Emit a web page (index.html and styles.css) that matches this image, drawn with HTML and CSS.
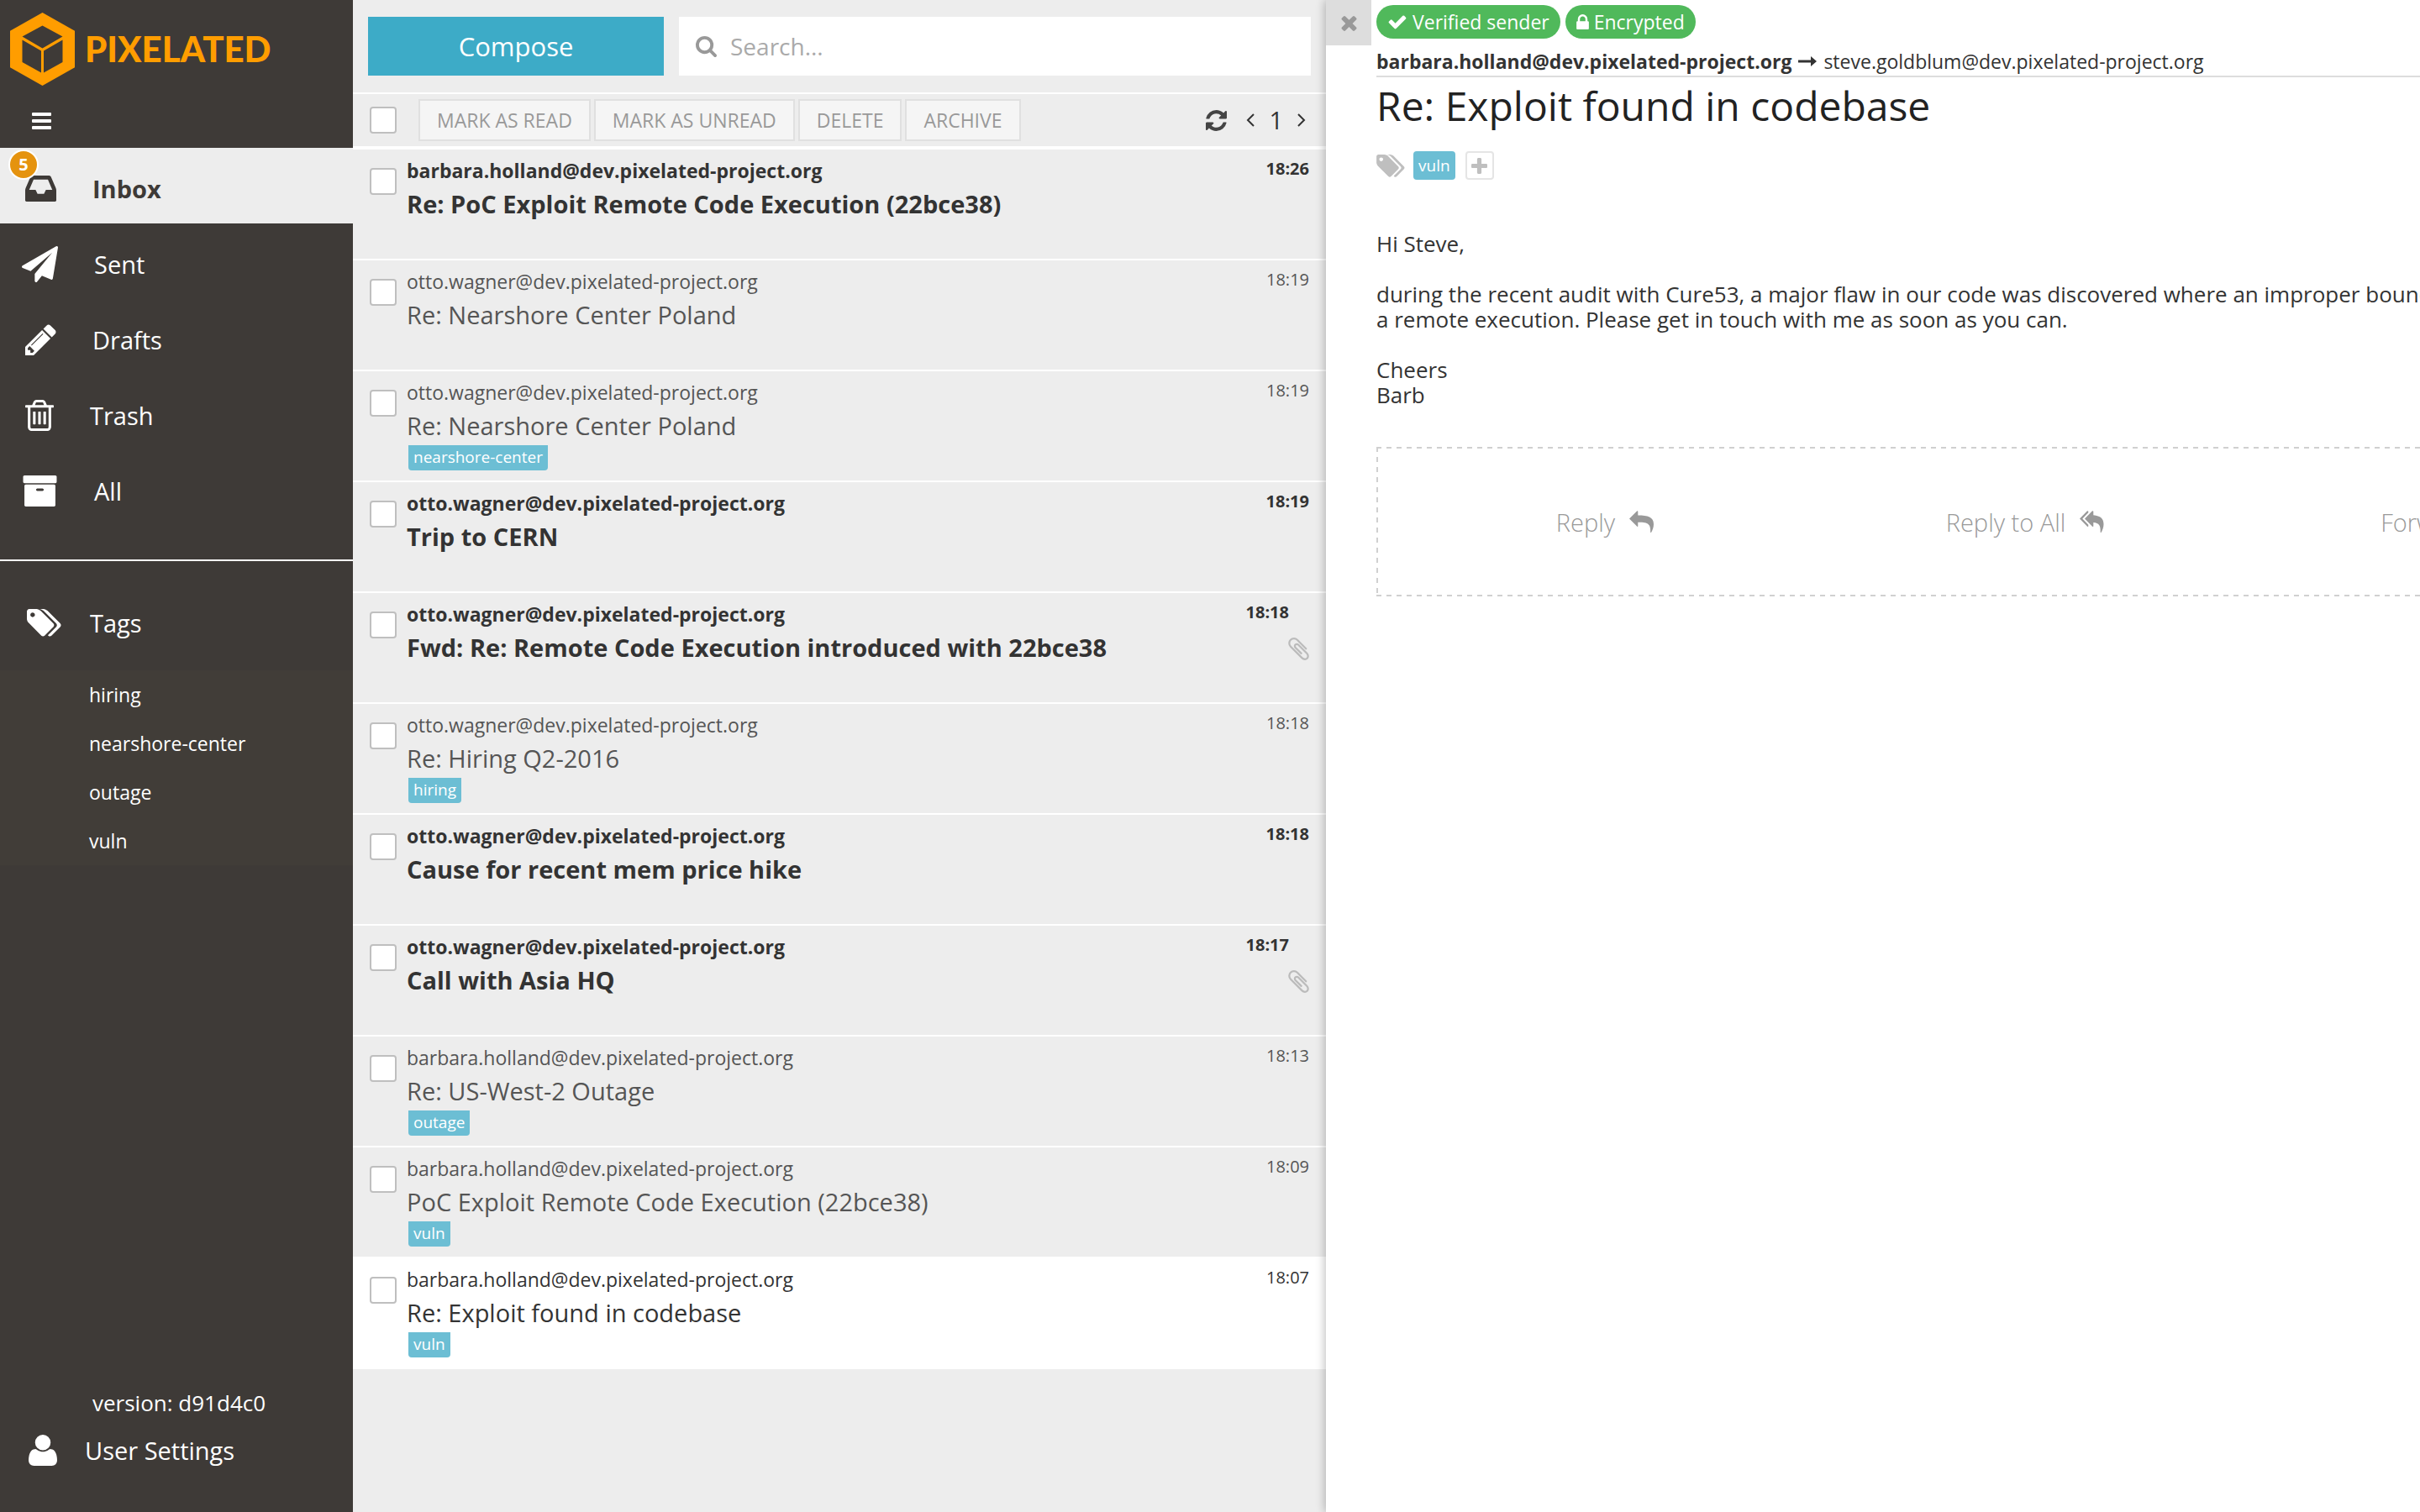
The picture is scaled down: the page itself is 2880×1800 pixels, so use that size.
FILE: index.html
```html
<!DOCTYPE html>
<html lang="en">
<head>
<meta charset="utf-8">
<title>Pixelated</title>
<link rel="stylesheet" href="styles.css">
</head>
<body>
<svg class="sprite" aria-hidden="true">
  <symbol id="i-tags" viewBox="0 128 1920 1536"><path d="M448 448q0-53-37.500-90.500t-90.500-37.500-90.500 37.500-37.500 90.500 37.500 90.500 90.500 37.500 90.500-37.500 37.500-90.500zm1067 576q0 53-37 90l-491 492q-39 37-91 37-53 0-90-37l-715-716q-38-37-64.500-101t-26.500-117v-416q0-52 38-90t90-38h416q53 0 117 26.500t102 64.500l715 714q37 39 37 91zm384 0q0 53-37 90l-491 492q-39 37-91 37-36 0-59-14t-53-45l470-470q37-37 37-90 0-52-37-91l-715-714q-38-38-102-64.500t-117-26.500h224q53 0 117 26.500t102 64.500l715 714q37 39 37 91z"/></symbol>
  <symbol id="i-clip" viewBox="192 128 1408 1536"><path d="M1596 1385q0 117-79 196t-196 79q-135 0-235-100l-777-776q-113-115-113-271 0-159 110-270t269-111q158 0 273 113l605 606q10 10 10 22 0 16-30.500 46.500t-46.500 30.500q-13 0-23-10l-606-607q-79-77-181-77-106 0-179 75t-73 181q0 105 76 181l776 777q63 63 145 63 64 0 106-42t42-106q0-82-63-145l-581-581q-26-24-60-24-29 0-48 19t-19 48q0 32 25 59l410 410q10 10 10 22 0 16-31 47t-47 31q-12 0-22-10l-410-410q-63-61-63-149 0-82 57-139t139-57q88 0 149 63l581 581q100 98 100 235z"/></symbol>
</svg>

<div class="app">
  <nav class="sidebar" aria-label="Mailboxes">
    <a class="logo" href="#">
      <svg class="logo-mark" viewBox="0 0 77 87" aria-hidden="true"><path fill-rule="evenodd" d="M38.500 0L77 21.700V65.300L38.500 87L0 65.300V21.700ZM38.500 15.500L14.500 28.500L38.500 42.500L62.500 28.500ZM14.500 32.500V59L37 71.500V45.500ZM62.500 32.500V59L40 71.500V45.500Z"/></svg>
      <span class="logo-text">PIXELATED</span>
    </a>
    <button class="menu-toggle" aria-label="Toggle menu">
      <svg width="23" height="20" viewBox="0 0 23 20"><rect width="23" height="4" rx="1"/><rect y="8" width="23" height="4" rx="1"/><rect y="16" width="23" height="4" rx="1"/></svg>
    </button>
    <ul class="nav">
      <li><a class="nav-item active" href="#">
        <svg width="37" height="31" viewBox="128 256 1536 1280"><path d="M1151 960h316q-1-3-2.500-8t-2.500-8l-212-496h-708l-212 496q-1 2-2.500 8t-2.500 8h316l95 192h320zm513 30v482q0 26-19 45t-45 19h-1408q-26 0-45-19t-19-45v-482q0-62 25-123l238-552q10-25 36.500-42t52.500-17h832q26 0 52.500 17t36.500 42l238 552q25 61 25 123z"/></svg>
        <span>Inbox</span><span class="count">5</span></a></li>
      <li><a class="nav-item wide" href="#">
        <svg width="43" height="43" viewBox="0 0 1792 1792"><path d="M1764 11q33 24 27 64l-256 1536q-5 29-32 45-14 8-31 8-11 0-24-5l-453-185-242 295q-18 23-49 23-13 0-22-4-19-7-30.500-23.500t-11.500-36.500v-349l864-1059-1069 925-395-162q-37-14-40-55-2-40 32-59l1664-960q15-9 32-9 20 0 36 11z"/></svg>
        <span>Sent</span></a></li>
      <li><a class="nav-item" href="#">
        <svg width="37" height="37" viewBox="128 128 1536 1536"><path d="M491 1536l91-91-235-235-91 91v107h128v128h107zm523-928q0-22-22-22-10 0-17 7l-542 542q-7 7-7 17 0 22 22 22 10 0 17-7l542-542q7-7 7-17zm-54-192l416 416-832 832h-416v-416zm683 96q0 53-37 90l-166 166-416-416 166-165q36-38 90-38 53 0 91 38l235 234q37 39 37 91z"/></svg>
        <span>Drafts</span></a></li>
      <li><a class="nav-item" href="#">
        <svg width="34" height="37" viewBox="192 128 1408 1536"><path d="M704 736v576q0 14-9 23t-23 9h-64q-14 0-23-9t-9-23v-576q0-14 9-23t23-9h64q14 0 23 9t9 23zm256 0v576q0 14-9 23t-23 9h-64q-14 0-23-9t-9-23v-576q0-14 9-23t23-9h64q14 0 23 9t9 23zm256 0v576q0 14-9 23t-23 9h-64q-14 0-23-9t-9-23v-576q0-14 9-23t23-9h64q14 0 23 9t9 23zm128 724v-948h-896v948q0 22 7 40.500t14.500 27 10.500 8.500h832q3 0 10.500-8.500t14.500-27 7-40.500zm-672-1076h448l-48-117q-7-9-17-11h-317q-10 2-17 11zm928 32v64q0 14-9 23t-23 9h-96v948q0 83-47 143.500t-113 60.500h-832q-66 0-113-58.500t-47-141.500v-952h-96q-14 0-23-9t-9-23v-64q0-14 9-23t23-9h309l70-167q15-37 54-63t79-26h320q40 0 79 26t54 63l70 167h309q14 0 23 9t9 23z"/></svg>
        <span>Trash</span></a></li>
      <li><a class="nav-item wide" href="#">
        <svg width="43" height="37" viewBox="0 128 1792 1536"><path d="M1088 832q0-26-19-45t-45-19h-256q-26 0-45 19t-19 45 19 45 45 19h256q26 0 45-19t19-45zm576-192v960q0 26-19 45t-45 19h-1408q-26 0-45-19t-19-45v-960q0-26 19-45t45-19h1408q26 0 45 19t19 45zm64-448v256q0 26-19 45t-45 19h-1536q-26 0-45-19t-19-45v-256q0-26 19-45t45-19h1536q26 0 45 19t19 45z"/></svg>
        <span>All</span></a></li>
    </ul>
    <section class="tags">
      <h2 class="tags-title"><svg width="41" height="33"><use href="#i-tags"/></svg><span>Tags</span></h2>
      <ul class="tag-list">
        <li><a href="#">hiring</a></li>
        <li><a href="#">nearshore-center</a></li>
        <li><a href="#">outage</a></li>
        <li><a href="#">vuln</a></li>
      </ul>
    </section>
    <footer class="side-foot">
      <p class="version">version: d91d4c0</p>
      <a class="settings" href="#">
        <svg width="34" height="37" viewBox="192 128 1408 1536"><path d="M1600 1405q0 120-73 189.500t-194 69.500h-874q-121 0-194-69.500t-73-189.500q0-53 3.500-103.500t14-109 26.500-108.500 43-97.500 62-81 85.500-53.500 111.500-20q9 0 42 21.500t74.500 48 108 48 133.500 21.500 133.500-21.500 108-48 74.500-48 42-21.500q61 0 111.500 20t85.500 53.500 62 81 43 97.500 26.500 108.500 14 109 3.500 103.500zm-320-893q0 159-112.500 271.500t-271.500 112.500-271.500-112.500-112.500-271.500 112.500-271.500 271.500-112.500 271.500 112.500 112.500 271.500z"/></svg>
        <span>User Settings</span></a>
    </footer>
  </nav>

  <section class="mail-list" aria-label="Messages">
    <header class="top">
      <button class="compose">Compose</button>
      <label class="search">
        <svg width="25" height="25" viewBox="64 128 1664 1664" aria-hidden="true"><path d="M1216 832q0-185-131.500-316.500t-316.500-131.500-316.500 131.500-131.500 316.500 131.500 316.500 316.500 131.500 316.500-131.500 131.500-316.500zm512 832q0 52-38 90t-90 38q-54 0-90-38l-343-342q-179 124-399 124-143 0-273.500-55.500t-225-150-150-225-55.500-273.500 55.500-273.500 150-225 225-150 273.500-55.500 273.500 55.500 225 150 150 225 55.500 273.500q0 220-124 399l343 343q37 37 37 90z"/></svg>
        <input type="search" placeholder="Search..." aria-label="Search">
      </label>
    </header>
    <div class="toolbar">
      <input class="check" type="checkbox" aria-label="Select all">
      <div class="actions">
        <button>MARK AS READ</button>
        <button>MARK AS UNREAD</button>
        <button>DELETE</button>
        <button>ARCHIVE</button>
      </div>
      <div class="pager">
        <button class="refresh" aria-label="Refresh"><svg width="25" height="25" viewBox="128 128 1536 1536"><path d="M1639 1056q0 5-1 7-64 268-268 434.500t-478 166.500q-146 0-282.500-55t-243.500-157l-129 129q-19 19-45 19t-45-19-19-45v-448q0-26 19-45t45-19h448q26 0 45 19t19 45-19 45l-137 137q71 66 161 102t187 36q134 0 250-65t186-179q11-17 53-117 8-23 30-23h192q13 0 22.500 9.500t9.500 22.500zm25-800v448q0 26-19 45t-45 19h-448q-26 0-45-19t-19-45 19-45l138-138q-148-137-349-137-134 0-250 65t-186 179q-11 17-53 117-8 23-30 23h-199q-13 0-22.500-9.500t-9.500-22.500v-7q65-268 270-434.500t480-166.500q146 0 284 55.500t245 156.500l130-129q19-19 45-19t45 19 19 45z"/></svg></button>
        <button aria-label="Previous page"><svg width="10" height="16" viewBox="0 0 10 16"><path class="line" d="M9 1L2 8L9 15"/></svg></button>
        <span>1</span>
        <button aria-label="Next page"><svg width="10" height="16" viewBox="0 0 10 16"><path class="line" d="M1 1L8 8L1 15"/></svg></button>
      </div>
    </div>
    <ul class="mails">
      <li class="mail unread"><input class="check" type="checkbox" aria-label="Select message">
        <div class="mail-body"><p class="from">barbara.holland@dev.pixelated-project.org</p><p class="subject">Re: PoC Exploit Remote Code Execution (22bce38)</p></div>
        <div class="meta"><time>18:26</time></div></li>
      <li class="mail"><input class="check" type="checkbox" aria-label="Select message">
        <div class="mail-body"><p class="from">otto.wagner@dev.pixelated-project.org</p><p class="subject">Re: Nearshore Center Poland</p></div>
        <div class="meta"><time>18:19</time></div></li>
      <li class="mail"><input class="check" type="checkbox" aria-label="Select message">
        <div class="mail-body"><p class="from">otto.wagner@dev.pixelated-project.org</p><p class="subject">Re: Nearshore Center Poland</p><span class="tag">nearshore-center</span></div>
        <div class="meta"><time>18:19</time></div></li>
      <li class="mail unread"><input class="check" type="checkbox" aria-label="Select message">
        <div class="mail-body"><p class="from">otto.wagner@dev.pixelated-project.org</p><p class="subject">Trip to CERN</p></div>
        <div class="meta"><time>18:19</time></div></li>
      <li class="mail unread"><input class="check" type="checkbox" aria-label="Select message">
        <div class="mail-body"><p class="from">otto.wagner@dev.pixelated-project.org</p><p class="subject">Fwd: Re: Remote Code Execution introduced with 22bce38</p></div>
        <div class="meta attached"><time>18:18</time><svg width="25" height="27"><use href="#i-clip"/></svg></div></li>
      <li class="mail"><input class="check" type="checkbox" aria-label="Select message">
        <div class="mail-body"><p class="from">otto.wagner@dev.pixelated-project.org</p><p class="subject">Re: Hiring Q2-2016</p><span class="tag">hiring</span></div>
        <div class="meta"><time>18:18</time></div></li>
      <li class="mail unread"><input class="check" type="checkbox" aria-label="Select message">
        <div class="mail-body"><p class="from">otto.wagner@dev.pixelated-project.org</p><p class="subject">Cause for recent mem price hike</p></div>
        <div class="meta"><time>18:18</time></div></li>
      <li class="mail unread"><input class="check" type="checkbox" aria-label="Select message">
        <div class="mail-body"><p class="from">otto.wagner@dev.pixelated-project.org</p><p class="subject">Call with Asia HQ</p></div>
        <div class="meta attached"><time>18:17</time><svg width="25" height="27"><use href="#i-clip"/></svg></div></li>
      <li class="mail"><input class="check" type="checkbox" aria-label="Select message">
        <div class="mail-body"><p class="from">barbara.holland@dev.pixelated-project.org</p><p class="subject">Re: US-West-2 Outage</p><span class="tag">outage</span></div>
        <div class="meta"><time>18:13</time></div></li>
      <li class="mail"><input class="check" type="checkbox" aria-label="Select message">
        <div class="mail-body"><p class="from">barbara.holland@dev.pixelated-project.org</p><p class="subject">PoC Exploit Remote Code Execution (22bce38)</p><span class="tag">vuln</span></div>
        <div class="meta"><time>18:09</time></div></li>
      <li class="mail open"><input class="check" type="checkbox" aria-label="Select message">
        <div class="mail-body"><p class="from">barbara.holland@dev.pixelated-project.org</p><p class="subject">Re: Exploit found in codebase</p><span class="tag">vuln</span></div>
        <div class="meta"><time>18:07</time></div></li>
    </ul>
  </section>

  <main class="reader">
    <button class="close" aria-label="Close message"><svg width="19" height="19" viewBox="302 302 1188 1252"><path d="M1490 1322q0 40-28 68l-136 136q-28 28-68 28t-68-28l-294-294-294 294q-28 28-68 28t-68-28l-136-136q-28-28-28-68t28-68l294-294-294-294q-28-28-28-68t28-68l136-136q28-28 68-28t68 28l294 294 294-294q28-28 68-28t68 28l136 136q28 28 28 68t-28 68l-294 294 294 294q28 28 28 68z"/></svg></button>
    <article class="message">
      <div class="badges">
        <span class="badge"><svg width="24" height="24" viewBox="0 0 1792 1792"><path d="M1671 566q0 40-28 68l-724 724-136 136q-28 28-68 28t-68-28l-136-136-362-362q-28-28-28-68t28-68l136-136q28-28 68-28t68 28l294 295 656-657q28-28 68-28t68 28l136 136q28 28 28 68z"/></svg>Verified sender</span>
        <span class="badge"><svg width="15" height="18" viewBox="320 128 1152 1408"><path d="M640 768h512v-192q0-106-75-181t-181-75-181 75-75 181v192zm832 96v576q0 40-28 68t-68 28h-960q-40 0-68-28t-28-68v-576q0-40 28-68t68-28h32v-192q0-184 132-316t316-132 316 132 132 316v192h32q40 0 68 28t28 68z"/></svg>Encrypted</span>
      </div>
      <p class="route"><strong>barbara.holland@dev.pixelated-project.org</strong><svg width="22" height="12" viewBox="0 0 22 12" aria-label="to"><path d="M0 4.500H15V0L22 6L15 12V7.500H0Z"/></svg><span>steve.goldblum@dev.pixelated-project.org</span></p>
      <h1 class="title">Re: Exploit found in codebase</h1>
      <div class="msg-tags">
        <svg width="34" height="27"><use href="#i-tags"/></svg>
        <span class="tag">vuln</span>
        <button class="add-tag" aria-label="Add tag"><svg width="19" height="19" viewBox="192 128 1408 1408"><path d="M1600 736v192q0 40-28 68t-68 28h-416v416q0 40-28 68t-68 28h-192q-40 0-68-28t-28-68v-416h-416q-40 0-68-28t-28-68v-192q0-40 28-68t68-28h416v-416q0-40 28-68t68-28h192q40 0 68 28t28 68v416h416q40 0 68 28t28 68z"/></svg></button>
      </div>
      <div class="text">
        <p>Hi Steve,</p>
        <p>during the recent audit with Cure53, a major flaw in our code was discovered where an improper bounds check could lead to<br>a remote execution. Please get in touch with me as soon as you can.</p>
        <p>Cheers<br>Barb</p>
      </div>
      <div class="replies">
        <button>Reply<svg width="29" height="26" viewBox="0 0 29 26"><path d="M0 9.500L9.300 0.300Q10.300 0 10.300 1V5.500C22 5.500 29 7.500 29 16C29 20 27.500 23.500 26 26H25.200C25.500 16 23 13.700 10.300 13.800V18.300Q10.300 19.300 9.300 18.700Z"/></svg></button>
        <button>Reply to All<svg width="29" height="26" viewBox="0 0 29 26"><path d="M6 9.500L15 0.300Q16.300 0 16.300 1V5.300C25 6 28.500 10 28.500 16C28.500 20 27 23.500 25.500 26H24.700C25 17.500 23 14.500 16.300 14V18.300Q16.300 19.300 15 18.700ZM0 9.500L9 0.300Q10.300 0 10.300 1V2.300L3.300 9.500L10.300 16.700V18.300Q10.300 19.300 9 18.700Z"/></svg></button>
        <button>Forward<svg width="29" height="26" viewBox="0 0 29 26"><path d="M29 9.500L19.700 0.300Q18.700 0 18.700 1V5.500C7 5.500 0 7.500 0 16C0 20 1.500 23.500 3 26H3.800C3.500 16 6 13.700 18.700 13.800V18.300Q18.700 19.300 19.700 18.700Z"/></svg></button>
      </div>
    </article>
  </main>
</div>
</body>
</html>
```
FILE: styles.css
```css
* { box-sizing: border-box; }
body, h1, h2, p, ul { margin: 0; padding: 0; }
ul { list-style: none; }
body { font-family: "Open Sans", "Noto Sans", sans-serif; font-size: 23px; color: #333; background: #fff; }
a { color: inherit; text-decoration: none; }
button { font: inherit; color: inherit; background: none; border: 0; padding: 0; margin: 0; cursor: pointer; }
svg { display: block; flex: none; fill: currentColor; }
.sprite { display: none; }
.app { display: flex; min-height: 100vh; overflow: hidden; }

/* Sidebar */
.sidebar { flex: 0 0 420px; display: flex; flex-direction: column; background: #3e3a37; color: #fff; }
.logo { display: flex; align-items: center; gap: 12px; height: 116px; padding-left: 12px; color: #ff9d00; }
.logo-mark { width: 77px; height: 87px; }
.logo-text { font-family: Lato, sans-serif; font-weight: 900; font-size: 42px; line-height: 52px; }
.menu-toggle { display: flex; align-items: center; height: 60px; padding: 0 0 4px 38px; }
.nav { padding-bottom: 40px; border-bottom: 2px solid #fff; }
.nav-item { position: relative; display: flex; align-items: center; gap: 43px; height: 90px; padding: 6px 0 0 30px; font-size: 29px; }
.nav-item.wide { padding-left: 26px; }
.nav-item.active { background: #ededed; color: #3e3a37; font-weight: 700; }
.count { position: absolute; left: 10px; top: 2px; width: 36px; height: 36px; border: 2px solid #fff; border-radius: 50%; background: #e5930f; color: #fff; font-size: 20px; line-height: 32px; text-align: center; }
.tags-title { display: flex; align-items: center; gap: 34px; height: 130px; padding: 16px 0 0 32px; font-size: 29px; font-weight: 400; }
.tag-list { background: #413d38; }
.tag-list a { display: block; padding-left: 106px; line-height: 58px; }
.side-foot { margin-top: auto; padding-bottom: 46px; }
.version { padding-left: 110px; font-size: 26px; line-height: 56px; }
.settings { display: flex; align-items: center; gap: 33px; height: 56px; padding-left: 34px; font-size: 29px; }

/* Message list */
.mail-list { flex: 0 0 1158px; background: #ededed; }
.top { display: flex; gap: 18px; padding: 20px 18px; border-bottom: 2px solid #fff; }
.compose { flex: 0 0 352px; height: 70px; background: #3dabc7; color: #fff; font-size: 31px; }
.search { flex: 1; display: flex; align-items: center; gap: 16px; padding-left: 20px; background: #fff; color: #999; }
.search input { flex: 1; min-width: 0; padding: 0; border: 0; outline: 0; background: none; font: inherit; font-size: 28px; appearance: none; }
.search input::placeholder { color: #aaa; }
.check { appearance: none; flex: none; width: 32px; height: 32px; margin: 0; border: 2px solid #bfbfbf; border-radius: 4px; background: #fff; }
.toolbar { display: flex; align-items: center; height: 66px; padding: 0 24px 0 20px; border-bottom: 4px solid #fff; }
.actions { display: flex; gap: 4px; margin-left: 26px; }
.actions button { height: 50px; padding: 0 20px; border: 2px solid #e0e0e0; background: #f5f5f5; color: #999; }
.pager { display: flex; align-items: center; gap: 17px; margin-left: auto; font-size: 29px; line-height: 40px; }
.refresh { margin-right: 6px; color: #444; }
.line { fill: none; stroke: currentColor; stroke-width: 2; }
.mail { display: flex; height: 132px; padding: 0 20px; border-bottom: 2px solid #fff; color: #555; }
.mail .check { margin-top: 22px; }
.mail-body { flex: 1; padding: 5px 0 0 12px; line-height: 40px; }
.subject { font-size: 29px; }
.unread { color: #333; font-weight: 700; }
.open { background: #fff; color: #333; }
.tag { display: block; width: fit-content; padding: 0 6px; border-radius: 4px; background: #6cbed4; color: #fff; font-size: 19px; line-height: 34px; }
.mail .tag { margin: 3px 0 0 2px; padding-bottom: 2px; border-radius: 0 0 4px 4px; line-height: 28px; }
.meta { display: flex; flex-direction: column; align-items: flex-end; padding-top: 3px; font-size: 20px; line-height: 40px; }
.attached time { margin-right: 24px; }
.attached svg { margin-top: 10px; color: #bbb; }

/* Reader */
.reader { position: relative; flex: 1; min-width: 0; display: flex; align-items: flex-start; background: #fff; box-shadow: -2px 0 10px rgba(0, 0, 0, .24); }
.close { flex: none; display: flex; align-items: center; justify-content: center; width: 54px; height: 54px; background: #ddd; color: #999; }
.message { flex: 1; min-width: 0; margin: 0 -280px 0 6px; }
.badges { display: flex; gap: 6px; padding-top: 6px; }
.badge { display: flex; align-items: center; gap: 6px; height: 40px; padding: 0 13px; border-radius: 20px; background: #50b95b; color: #fff; }
.route { display: flex; align-items: center; gap: 8px; height: 46px; padding-top: 10px; border-bottom: 2px solid #ddd; }
.title { font-size: 48px; font-weight: 400; line-height: 68px; color: #222; }
.msg-tags { display: flex; align-items: center; margin-top: 20px; height: 34px; color: #bfbfbf; }
.msg-tags .tag { margin: 0 12px 0 10px; }
.add-tag { display: flex; align-items: center; justify-content: center; width: 34px; height: 34px; border: 2px solid #e5e5e5; border-radius: 4px; }
.text { display: grid; gap: 30px; margin-top: 61px; font-size: 26px; line-height: 30px; white-space: nowrap; }
.replies {
  --dash: #d0d0d0 0 6px, transparent 6px 12px;
  display: grid; grid-template-columns: repeat(3, 1fr); height: 178px; margin-top: 47px; padding-left: 22px;
  background:
    repeating-linear-gradient(to right, var(--dash)) top / 100% 2px no-repeat,
    repeating-linear-gradient(to right, var(--dash)) bottom / 100% 2px no-repeat,
    repeating-linear-gradient(to bottom, var(--dash)) left / 2px 100% no-repeat,
    repeating-linear-gradient(to bottom, var(--dash)) right / 2px 100% no-repeat;
}
.replies button { display: flex; align-items: center; justify-content: center; gap: 17px; font-size: 29px; font-weight: 300; color: #999; }
```
